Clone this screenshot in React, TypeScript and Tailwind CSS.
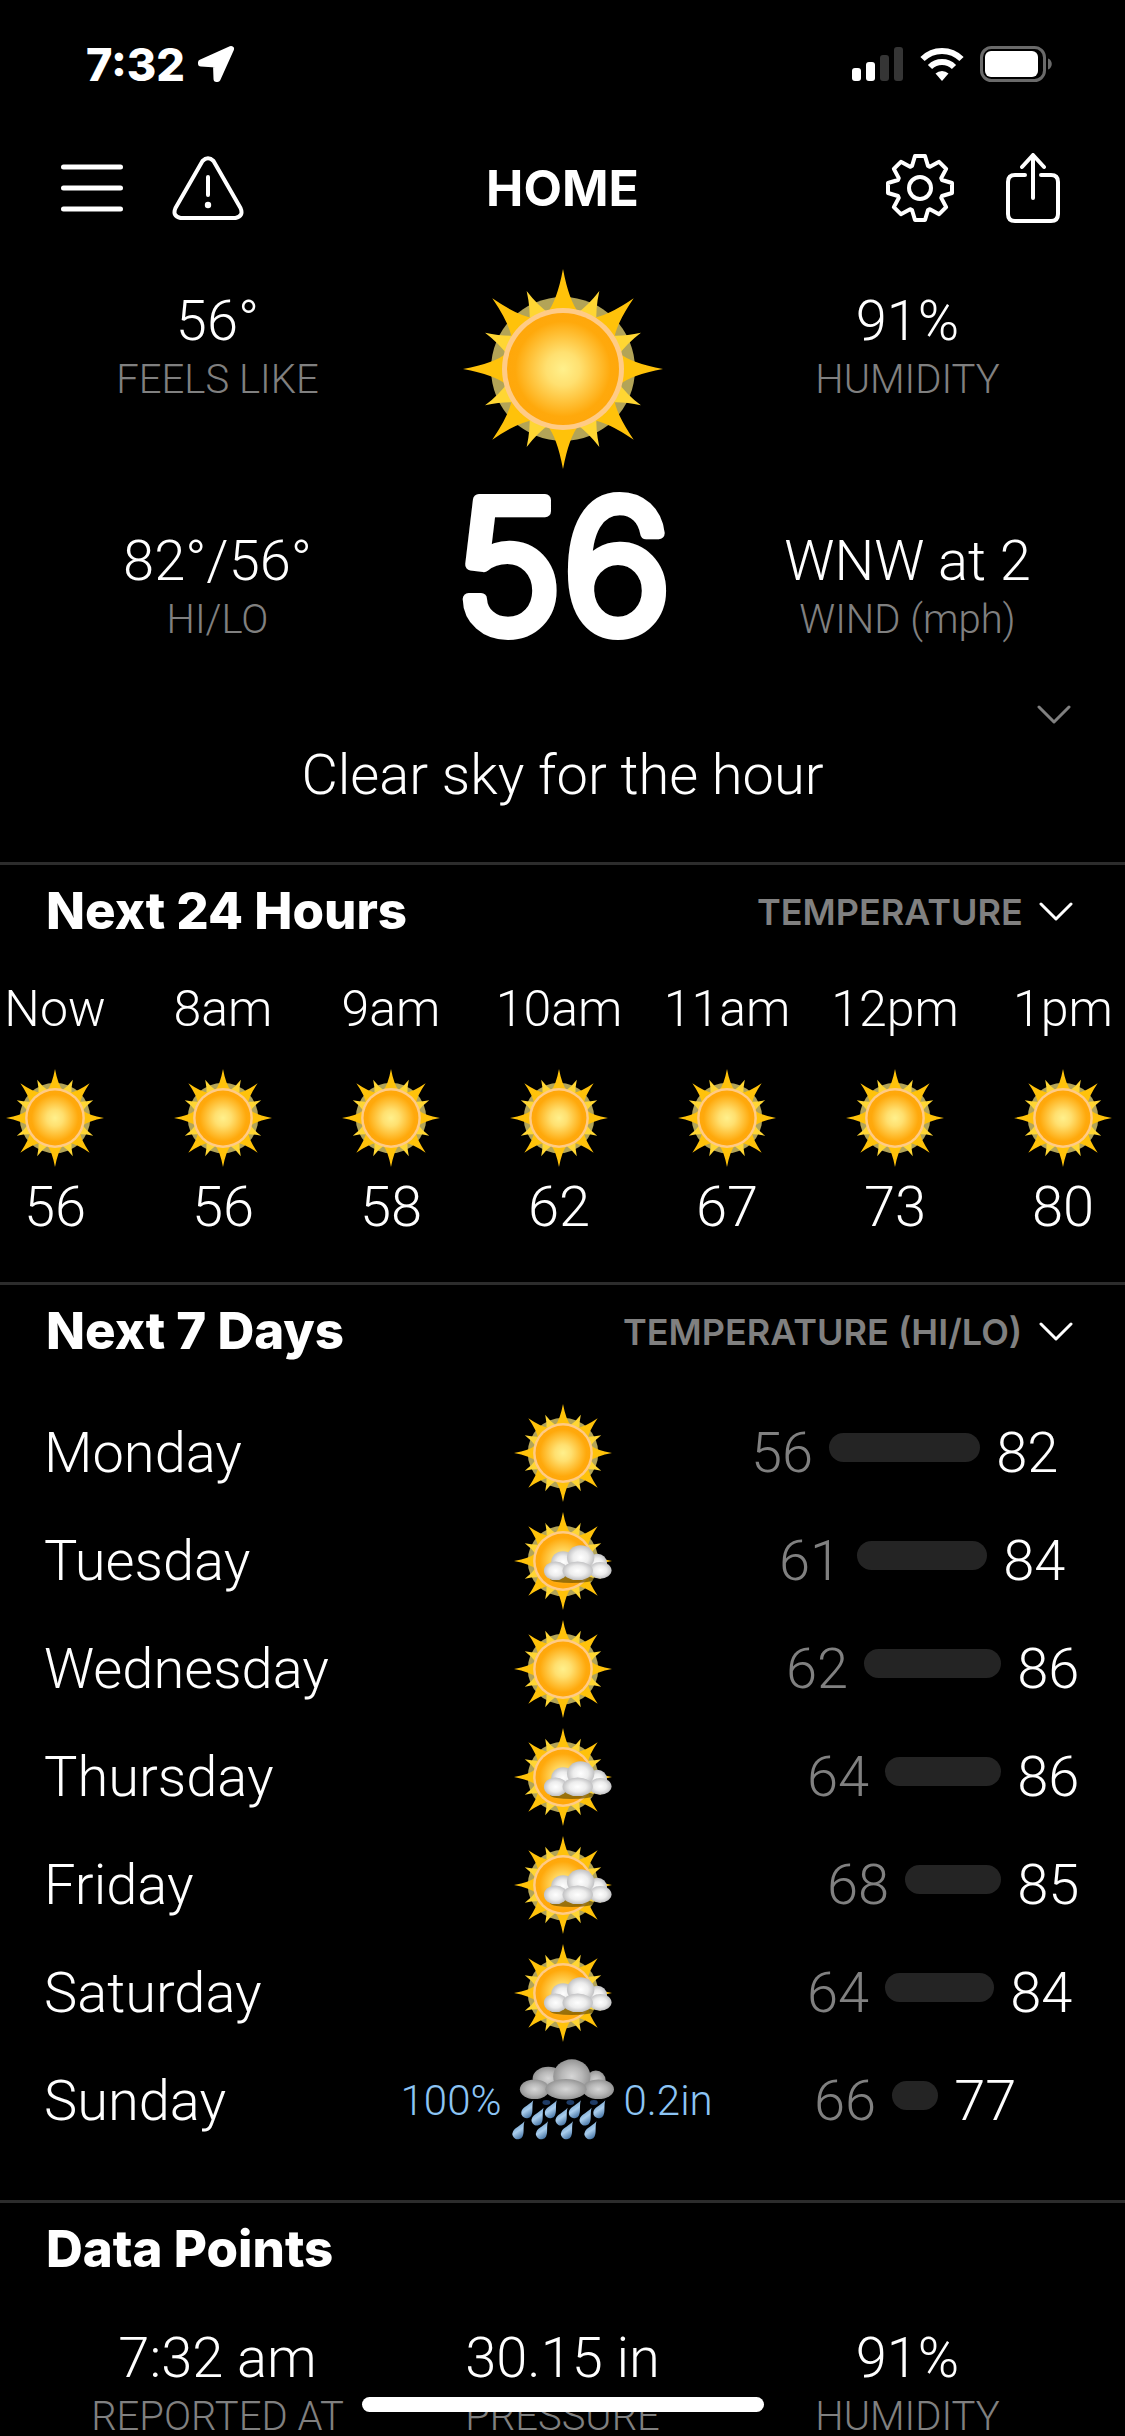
import clsx from "clsx";

type Sky = "clear" | "partly" | "rain";

const hours = [
  { label: "Now", temp: 56 },
  { label: "8am", temp: 56 },
  { label: "9am", temp: 58 },
  { label: "10am", temp: 62 },
  { label: "11am", temp: 67 },
  { label: "12pm", temp: 73 },
  { label: "1pm", temp: 80 },
];

// start / length are the bar's place on the weekly temperature track
const days: { name: string; sky: Sky; lo: number; hi: number; start: number; length: number; chance?: string; amount?: string }[] = [
  { name: "Monday", sky: "clear", lo: 56, hi: 82, start: 0, length: 151 },
  { name: "Tuesday", sky: "partly", lo: 61, hi: 84, start: 28, length: 130 },
  { name: "Wednesday", sky: "clear", lo: 62, hi: 86, start: 35, length: 137 },
  { name: "Thursday", sky: "partly", lo: 64, hi: 86, start: 56, length: 116 },
  { name: "Friday", sky: "partly", lo: 68, hi: 85, start: 76, length: 96 },
  { name: "Saturday", sky: "partly", lo: 64, hi: 84, start: 56, length: 109 },
  { name: "Sunday", sky: "rain", lo: 66, hi: 77, start: 63, length: 46, chance: "100%", amount: "0.2in" },
];

const octants = [0, 45, 90, 135, 180, 225, 270, 315];
const shortRays = [25, 65, 115, 155, 205, 245, 295, 335];

function gearPath() {
  const tooth = [[-8, -22], [-5, -32], [5, -32], [8, -22]];
  const points = octants.flatMap((deg) => {
    const a = (deg * Math.PI) / 180;
    return tooth.map(([x, y]) => `${(x * Math.cos(a) - y * Math.sin(a)).toFixed(2)} ${(x * Math.sin(a) + y * Math.cos(a)).toFixed(2)}`);
  });
  return `M${points.join("L")}Z`;
}

function Gradients() {
  return (
    <svg className="absolute h-0 w-0" aria-hidden="true">
      <defs>
        <radialGradient id="disc">
          <stop offset="0" stopColor="#fff08c" />
          <stop offset="0.3" stopColor="#ffe070" />
          <stop offset="0.85" stopColor="#ffa90c" />
          <stop offset="1" stopColor="#ffa70a" />
        </radialGradient>
        <radialGradient id="puff" cx="0.5" cy="0.5" r="0.55">
          <stop offset="0" stopColor="#ffffff" />
          <stop offset="0.5" stopColor="#ededed" />
          <stop offset="1" stopColor="#b8b8ba" />
        </radialGradient>
        <radialGradient id="storm" cx="0.5" cy="0.5" r="0.55">
          <stop offset="0" stopColor="#d6d6d6" />
          <stop offset="0.5" stopColor="#b8b8b8" />
          <stop offset="1" stopColor="#8c8c8c" />
        </radialGradient>
        <linearGradient id="drop" x1="0" y1="0" x2="1" y2="1">
          <stop offset="0" stopColor="#5f93c4" />
          <stop offset="0.5" stopColor="#a9cdec" />
          <stop offset="1" stopColor="#2f5f93" />
        </linearGradient>
      </defs>
    </svg>
  );
}

function SunShape() {
  return (
    <g>
      <circle r="72" fill="#b3a457" />
      {shortRays.map((deg) => (
        <path key={deg} d="M-11-56Q-4-68 0-86Q4-68 11-56Z" fill="#ffd633" transform={`rotate(${deg})`} />
      ))}
      {octants.map((deg) => (
        <path key={deg} d="M-16-56Q-6-68 0-100Q6-68 16-56Z" fill="#ffc20a" transform={`rotate(${deg})`} />
      ))}
      <circle r="61" fill="#ffcb86" />
      <circle r="56" fill="url(#disc)" />
    </g>
  );
}

const whitePuffs = [
  [0, 2, 24, 22],
  [70, 5, 20, 20],
  [36, -7, 28, 25],
  [-15, 20, 24, 19],
  [76, 19, 23, 17],
  [30, 20, 31, 19],
];

const stormPuffs = [
  [-30, -46, 32, 24],
  [67, -42, 20, 20],
  [18, -50, 38, 35],
  [-58, -24, 30, 20],
  [72, -24, 32, 20],
  [6, -24, 42, 21],
];

const drops = [
  [-71, 18], [-23, 18], [26, 18], [76, 18],
  [-50, 33], [-1, 33], [48, 33],
  [-89, 61], [-41, 61], [10, 61], [58, 61],
];

function WeatherIcon({ sky, className }: { sky: Sky; className?: string }) {
  return (
    <svg viewBox="-100 -100 200 200" className={clsx("shrink-0 overflow-visible", className)} role="img" aria-label={sky}>
      {sky !== "rain" && <SunShape />}
      {sky === "partly" && (
        <g>
          <ellipse cx="18" cy="37" rx="44" ry="8" fill="#6d5200" opacity="0.7" />
          {whitePuffs.map(([cx, cy, rx, ry]) => (
            <ellipse key={`${cx},${cy}`} cx={cx} cy={cy} rx={rx} ry={ry} fill="url(#puff)" />
          ))}
        </g>
      )}
      {sky === "rain" && (
        <g>
          {[-34, 15, 63].map((x) => (
            <ellipse key={x} cx={x} cy="3" rx="8" ry="5" fill="#1f3c66" />
          ))}
          {drops.map(([x, y]) => (
            <path
              key={`${x},${y}`}
              d="M0-22C3-9 11-2 11 7A11 11 0 0 1-11 7C-11-2-3-9 0-22Z"
              fill="url(#drop)"
              transform={`translate(${x} ${y}) rotate(28)`}
            />
          ))}
          {stormPuffs.map(([cx, cy, rx, ry]) => (
            <ellipse key={`${cx},${cy}`} cx={cx} cy={cy} rx={rx} ry={ry} fill="url(#storm)" />
          ))}
        </g>
      )}
    </svg>
  );
}

function Chevron({ className }: { className?: string }) {
  return (
    <svg viewBox="0 0 34 20" className={clsx("h-5 w-[34px]", className)} fill="none" stroke="currentColor" strokeWidth="3" strokeLinecap="round" strokeLinejoin="round">
      <path d="M2 2L17 17L32 2" />
    </svg>
  );
}

function StatusBar() {
  return (
    <div className="flex h-32 items-center justify-between pr-[72px] pl-[86px] font-[Inter,sans-serif]">
      <div className="flex items-center gap-3">
        <span className="text-[45px] leading-none font-extrabold">7:32</span>
        <svg viewBox="0 0 38 38" className="size-[38px]" fill="white" stroke="white" strokeWidth="6" strokeLinejoin="round">
          <path d="M34 4L4 17.500L4 18.500L19 19.500L19.500 34L20.500 34Z" />
        </svg>
      </div>
      <div className="flex items-center gap-4">
        <svg viewBox="0 0 52 34" className="h-[34px] w-[52px]">
          <rect x="0" y="21" width="9" height="13" rx="3" fill="white" />
          <rect x="14" y="15" width="9" height="19" rx="3" fill="white" />
          <rect x="28" y="8" width="9" height="26" rx="3" fill="#353535" />
          <rect x="42" y="0" width="9" height="34" rx="3" fill="#353535" />
        </svg>
        <svg viewBox="0 0 44 34" className="h-[34px] w-11" fill="none" stroke="white" strokeWidth="6">
          <path d="M2.500 12A27.500 27.500 0 0 1 41.500 12" />
          <path d="M10 20A17 17 0 0 1 34 20" />
          <path d="M22 34L15.500 26.500A9.500 9.500 0 0 1 28.500 26.500Z" fill="white" stroke="none" />
        </svg>
        <svg viewBox="0 0 73 36" className="h-9 w-[73px]">
          <rect x="1.500" y="1.500" width="63" height="33" rx="10" fill="none" stroke="#6a6a6a" strokeWidth="3" />
          <rect x="5" y="5" width="53" height="26" rx="6" fill="white" />
          <path d="M68 12.500C73 14 73 22 68 23.500Z" fill="#6a6a6a" />
        </svg>
      </div>
    </div>
  );
}

function Header() {
  return (
    <header className="grid h-[120px] grid-cols-[1fr_auto_1fr] items-center px-[60px]">
      <div className="flex items-center gap-12">
        <button aria-label="Menu">
          <svg viewBox="0 0 64 52" className="h-[52px] w-16" stroke="white" strokeWidth="5" strokeLinecap="round">
            <path d="M3.500 5H60.500M3.500 26H60.500M3.500 47H60.500" />
          </svg>
        </button>
        <button aria-label="Alerts">
          <svg viewBox="0 0 72 64" className="h-16 w-[72px]" fill="none" stroke="white" strokeWidth="4" strokeLinecap="round" strokeLinejoin="round">
            <path d="M30.500 5Q36 -0.500 41.500 5L68.500 52Q72 60 63.500 62H8.500Q0 60 3.500 52Z" />
            <path d="M36 21V39" />
            <circle cx="36" cy="49" r="3.200" fill="white" stroke="none" />
          </svg>
        </button>
      </div>
      <h1 className="font-[Inter,sans-serif] text-[50px] leading-none font-bold">HOME</h1>
      <div className="flex items-center justify-end gap-12 pr-0.5">
        <button aria-label="Settings">
          <svg viewBox="-35 -35 70 70" className="size-[70px]" fill="none" stroke="white" strokeWidth="4" strokeLinejoin="round">
            <path d={gearPath()} />
            <circle r="11" />
          </svg>
        </button>
        <button aria-label="Share">
          <svg viewBox="0 0 60 70" className="h-[70px] w-[60px]" fill="none" stroke="white" strokeWidth="4" strokeLinecap="round" strokeLinejoin="round">
            <path d="M22 22H12Q5 22 5 29V61Q5 68 12 68H48Q55 68 55 61V29Q55 22 48 22H38" />
            <path d="M30 45V3M19 14L30 2L41 14" />
          </svg>
        </button>
      </div>
    </header>
  );
}

function Stat({ value, label }: { value: string; label: string }) {
  return (
    <div className="text-center whitespace-nowrap">
      <p className="text-[56px] leading-[60px]">{value}</p>
      <p className="mt-[10px] text-[40px] leading-[38px] text-[#808080]">{label}</p>
    </div>
  );
}

function SectionHeader({ title, metric }: { title: string; metric?: string }) {
  return (
    <div className="flex h-[90px] items-center justify-between pr-[52px] pl-[46px] font-[Inter,sans-serif]">
      <h2 className="text-[51px] leading-none font-extrabold">{title}</h2>
      {metric && (
        <div className="relative flex items-center pt-1">
          <select aria-label={`${title} metric`} className="appearance-none bg-transparent pr-[50px] text-[36px] leading-none font-semibold text-[#808080]">
            <option>{metric}</option>
          </select>
          <Chevron className="pointer-events-none absolute right-0" />
        </div>
      )}
    </div>
  );
}

export default function App() {
  return (
    <div className="relative h-screen overflow-hidden bg-black font-[Roboto,sans-serif] font-light text-white">
      <Gradients />
      <StatusBar />
      <Header />

      <main>
        <section>
          <div className="grid grid-cols-3 px-[45px] pt-[21px]">
            <div className="flex flex-col gap-[132px] pt-[22px]">
              <Stat value="56°" label="FEELS LIKE" />
              <Stat value="82°/56°" label="HI/LO" />
            </div>
            <div className="flex flex-col items-center">
              <WeatherIcon sky="clear" className="size-[200px]" />
              {/* light digits under a round stroke give the rounded numerals */}
              <svg viewBox="0 0 300 196" className="h-[196px] w-[300px] overflow-visible">
                <text
                  x="150"
                  y="163"
                  textAnchor="middle"
                  fill="white"
                  stroke="white"
                  strokeWidth="12"
                  strokeLinejoin="round"
                  strokeLinecap="round"
                  className="font-[Inter,sans-serif] text-[182px] font-light"
                >
                  56
                </text>
              </svg>
            </div>
            <div className="flex flex-col gap-[132px] pt-[22px]">
              <Stat value="91%" label="HUMIDITY" />
              <Stat value="WNW at 2" label="WIND (mph)" />
            </div>
          </div>
          <div className="flex justify-end pt-[30px] pr-[54px]">
            <button aria-label="More conditions" className="flex h-10 items-center text-[#808080]">
              <Chevron />
            </button>
          </div>
          <p className="pt-2 pb-[55px] text-center text-[56px] leading-[64px]">Clear sky for the hour</p>
        </section>

        <section className="border-t-[3px] border-[#2c2c2c]">
          <SectionHeader title="Next 24 Hours" metric="TEMPERATURE" />
          <ul className="-ml-[29px] flex pt-6 pb-[45px]">
            {hours.map((hour) => (
              <li key={hour.label} className="flex w-[168px] shrink-0 flex-col items-center leading-[60px]">
                <span className="text-[50px]">{hour.label}</span>
                <WeatherIcon sky="clear" className="mt-[30px] mb-[10px] size-[98px]" />
                <span className="text-[56px]">{hour.temp}</span>
              </li>
            ))}
          </ul>
        </section>

        <section className="border-t-[3px] border-[#2c2c2c]">
          <SectionHeader title="Next 7 Days" metric="TEMPERATURE (HI/LO)" />
          <ul className="pt-6 pb-[45px]">
            {days.map((day) => (
              <li key={day.name} className="grid h-[108px] grid-cols-[1fr_auto_1fr] items-center text-[56px] leading-[60px]">
                <div className="flex items-center justify-between pr-3 pl-11">
                  <span>{day.name}</span>
                  <span className="text-[42px] text-[#8cc4f4]">{day.chance}</span>
                </div>
                <WeatherIcon sky={day.sky} className="size-[98px]" />
                <div className="flex items-center justify-between pl-3">
                  <span className="text-[42px] text-[#8cc4f4]">{day.amount}</span>
                  <div className="flex w-[374px] shrink-0 items-center gap-4" style={{ paddingLeft: day.start }}>
                    <span className="text-[#808080]">{day.lo}</span>
                    <span className="mb-3 h-[29px] shrink-0 rounded-full bg-[#242424]" style={{ width: day.length }} />
                    <span>{day.hi}</span>
                  </div>
                </div>
              </li>
            ))}
          </ul>
        </section>

        <section className="border-t-[3px] border-[#2c2c2c]">
          <SectionHeader title="Data Points" />
          <div className="grid grid-cols-3 px-[45px] pt-[35px]">
            <Stat value="7:32 am" label="REPORTED AT" />
            <Stat value="30.15 in" label="PRESSURE" />
            <Stat value="91%" label="HUMIDITY" />
          </div>
        </section>
      </main>

      <div className="absolute inset-x-0 bottom-6 mx-auto h-[15px] w-[402px] rounded-full bg-white" />
    </div>
  );
}
